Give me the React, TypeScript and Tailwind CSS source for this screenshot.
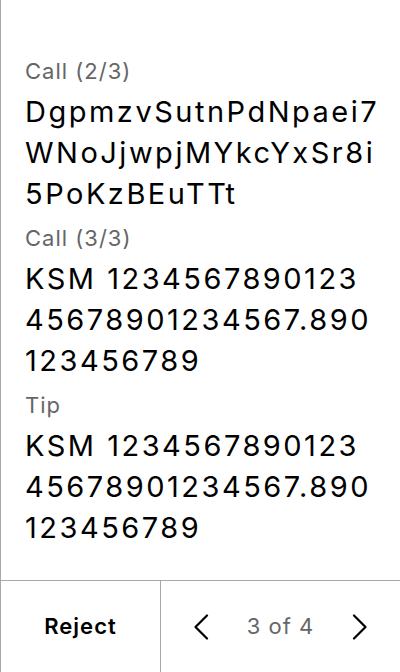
const ITEMS = [
  { label: 'Call (2/3)', lines: ['DgpmzvSutnPdNpaei7', 'WNoJjwpjMYkcYxSr8i', '5PoKzBEuTTt'] },
  { label: 'Call (3/3)', lines: ['KSM 1234567890123', '45678901234567.890', '123456789'] },
  { label: 'Tip', lines: ['KSM 1234567890123', '45678901234567.890', '123456789'] },
];

function Chevron({ dir }: { dir: 'left' | 'right' }) {
  return (
    <svg width="16" height="26" viewBox="0 0 16 26" fill="none" stroke="#000" strokeWidth="2.2" strokeLinecap="round" strokeLinejoin="round">
      {dir === 'left' ? <path d="M14 1.5 L2.5 13 L14 24.5" /> : <path d="M2 1.5 L13.5 13 L2 24.5" />}
    </svg>
  );
}

export default function App() {
  return (
    <div className="flex h-[672px] w-[400px] flex-col border-l border-[#a8a8a8] bg-white font-['Inter',sans-serif] text-black">
      <div className="flex flex-1 flex-col pl-6 pr-2 pt-[57px]">
        {ITEMS.map((item, i) => (
          <div key={i} className={i > 0 ? 'mt-2.5' : ''}>
            <div className="text-[22px] leading-[28px] tracking-[1px] text-[#666]">{item.label}</div>
            <div className="mt-1.5 whitespace-nowrap text-[29px] leading-[41px] tracking-[2.5px]">
              {item.lines.map((line, j) => (
                <div key={j}>{line}</div>
              ))}
            </div>
          </div>
        ))}
      </div>

      <div className="flex h-[92px] border-t border-[#a8a8a8]">
        <button className="flex w-[160px] items-center justify-center border-r border-[#a8a8a8] text-[22px] font-semibold tracking-[1px]">
          Reject
        </button>
        <div className="flex flex-1 items-center justify-between px-8">
          <Chevron dir="left" />
          <span className="text-[22px] tracking-[1px] text-[#666]">3 of 4</span>
          <Chevron dir="right" />
        </div>
      </div>
    </div>
  );
}
